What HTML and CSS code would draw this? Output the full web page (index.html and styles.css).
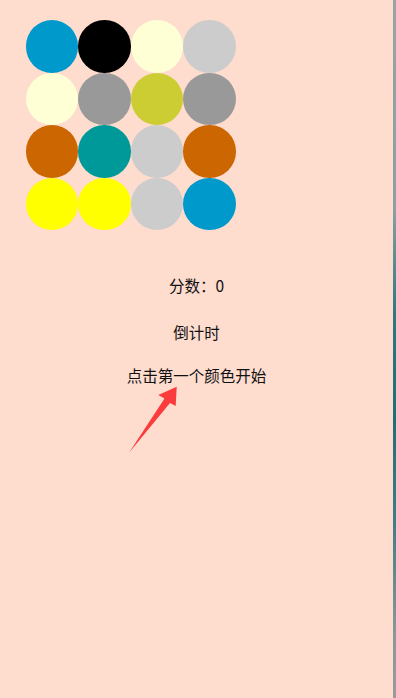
FILE: index.html
```html
<!DOCTYPE html>
<html>
<head>
<meta charset="utf-8">
<link rel="stylesheet" href="styles.css">
</head>
<body>
<div class="screen">
  <div class="page">
    <div class="grid">
      <div class="dot c-blue"></div>
      <div class="dot c-black"></div>
      <div class="dot c-cream"></div>
      <div class="dot c-lgray"></div>
      <div class="dot c-cream"></div>
      <div class="dot c-gray"></div>
      <div class="dot c-olive"></div>
      <div class="dot c-gray"></div>
      <div class="dot c-orange"></div>
      <div class="dot c-teal"></div>
      <div class="dot c-lgray"></div>
      <div class="dot c-orange"></div>
      <div class="dot c-yellow"></div>
      <div class="dot c-yellow"></div>
      <div class="dot c-lgray"></div>
      <div class="dot c-blue"></div>
    </div>
    <p class="line score">分数：0</p>
    <p class="line timer">倒计时</p>
    <p class="line hint">点击第一个颜色开始</p>
    <svg class="arrow" width="60" height="80" viewBox="0 0 60 80">
      <polygon points="48.7,0.7 47.7,20 42,17 1,66.7 36.5,12.5 30.3,9" fill="#fc3c3c"/>
    </svg>
  </div>
  <div class="edge"></div>
</div>
</body>
</html>
```

FILE: styles.css
```css
html, body {
  margin: 0;
  padding: 0;
}
body {
  width: 396px;
  height: 698px;
  overflow: hidden;
  font-family: "Noto Sans CJK SC", "Noto Sans", sans-serif;
}
.screen {
  display: flex;
  height: 698px;
}
.page {
  position: relative;
  width: 393px;
  height: 698px;
  background: #fedcce;
  color: #111;
}
.edge {
  width: 3px;
  height: 698px;
  background: linear-gradient(to bottom, #9aa3a5 0%, #8b9fa2 30%, #2c7a80 45%, #1f6f78 60%, #3f7f86 75%, #8a9698 90%, #9a9a9a 100%);
}
.grid {
  display: grid;
  grid-template-columns: repeat(4, 52.5px);
  grid-auto-rows: 52.5px;
  padding: 20px 0 0 25.5px;
}
.dot {
  width: 52.5px;
  height: 52.5px;
  border-radius: 50%;
}
.c-blue { background: #0099cc; }
.c-black { background: #000000; }
.c-cream { background: #ffffd6; }
.c-lgray { background: #cccccc; }
.c-gray { background: #999999; }
.c-olive { background: #cccc33; }
.c-orange { background: #cc6600; }
.c-teal { background: #009999; }
.c-yellow { background: #ffff00; }
.line {
  margin: 0;
  text-align: center;
  font-size: 15.5px;
  line-height: 20px;
}
.score { margin-top: 44.5px; }
.timer { margin-top: 27px; }
.hint { margin-top: 23px; }
.arrow {
  position: absolute;
  left: 128px;
  top: 386px;
}
```
